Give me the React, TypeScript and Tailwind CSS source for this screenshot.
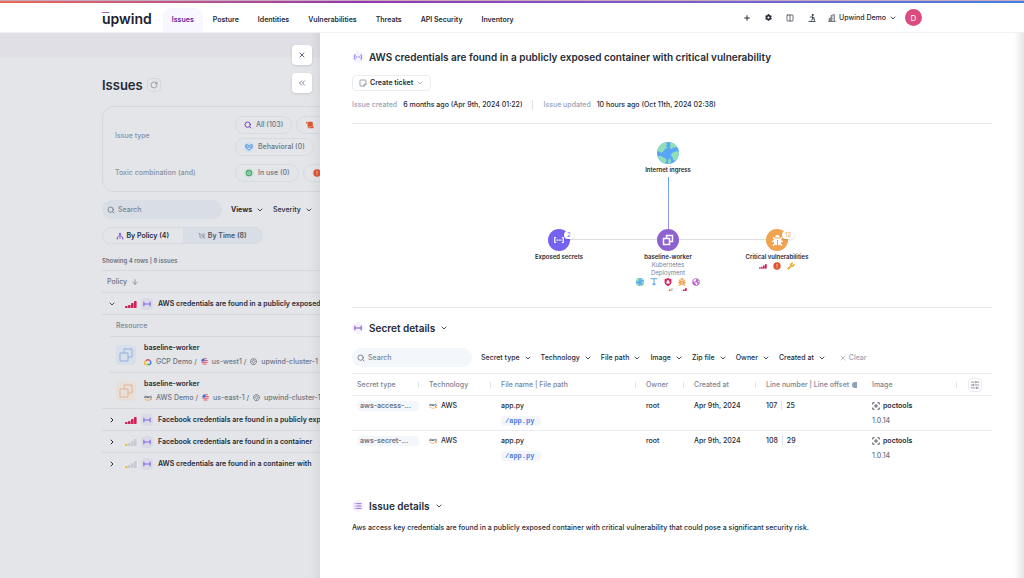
import type { ReactNode } from "react";
import {
  ArrowDown,
  ChevronDown,
  ChevronRight,
  ChevronsLeft,
  Columns2,
  List,
  Plus,
  RotateCw,
  Search,
  SlidersHorizontal,
  StickyNote,
  Wrench,
  X,
} from "lucide-react";
import { FaBug, FaCog, FaGlobeAmericas, FaScroll } from "react-icons/fa";

const navItems = [
  "Issues",
  "Posture",
  "Identities",
  "Vulnerabilities",
  "Threats",
  "API Security",
  "Inventory",
];

const secretFilters = [
  "Secret type",
  "Technology",
  "File path",
  "Image",
  "Zip file",
  "Owner",
  "Created at",
];

const secrets = [
  { type: "aws-access-...", line: 107, offset: 25 },
  { type: "aws-secret-...", line: 108, offset: 29 },
];

/* ---------- Icons ---------- */

const SecretIcon = ({ className = "" }: { className?: string }) => (
  <svg viewBox="0 0 12 12" className={className} fill="none" stroke="currentColor" strokeWidth="1.4">
    <path d="M2.600 3H.900v6h1.700M9.400 3h1.700v6H9.400" />
    <path d="M3 6h6.400" strokeWidth="1.500" strokeDasharray="1.600 .700" />
  </svg>
);

const BarIcon = ({ className = "" }: { className?: string }) => (
  <svg viewBox="0 0 12 12" className={className} fill="none" stroke="currentColor" strokeWidth="1.600">
    <path d="M1.300 2.600v6.800M10.700 2.600v6.800M1.300 6h9.400" />
  </svg>
);

const SignalIcon = ({
  level = 4,
  className = "h-2 w-3",
  color = "#cf2459",
}: {
  level?: number;
  className?: string;
  color?: string;
}) => (
  <svg viewBox="0 0 12 8" className={className}>
    {[2, 3, 5, 7].map((h, i) => (
      <rect
        key={h}
        x={i * 3}
        y={8 - h}
        width="2.6"
        height={h}
        rx=".6"
        fill={i < level ? color : "#c9cbd2"}
      />
    ))}
  </svg>
);

const AwsIcon = ({ className = "h-2 w-2" }: { className?: string }) => (
  <svg viewBox="0 0 16 12" className={className} fill="none">
    <path d="M1.500 6V3.500q0-1.500 1.500-1.500t1.500 1.500V6M1.500 4.500h3M6 2l1 4 1.300-3.500L9.500 6l1-4M15 2.500q-2.800-1-2.500.500t2 1-.300 2-2.200-.300" stroke="#4a5160" strokeWidth="1.200" />
    <path d="M1 8.500q7 4 13.500.500M13 8h2.300v2" stroke="#f29a38" strokeWidth="1.300" />
  </svg>
);

const GcpIcon = () => (
  <svg viewBox="0 0 16 14" className="h-2 w-2" fill="none" strokeWidth="3">
    <path d="M4 5a4.500 4.500 0 0 1 7.500-.800" stroke="#e0503f" />
    <path d="M11.500 4.200A5 5 0 0 1 12 12" stroke="#4a80e8" />
    <path d="M12 12H7" stroke="#3fa65b" />
    <path d="M7 12H4.500A3.200 3.200 0 0 1 4 5.500" stroke="#edbb35" />
  </svg>
);

const FlagIcon = () => (
  <svg viewBox="0 0 14 14" className="h-[7px] w-[7px]">
    <circle cx="7" cy="7" r="6.500" fill="#f1e6ea" />
    <path d="M7 1.500h4.500M7 5h6.500M1 8.500h12.500M3 12h8" stroke="#dc5160" strokeWidth="1.900" />
    <path d="M7 .500V7H.500A6.500 6.500 0 0 1 7 .500" fill="#3e6fca" />
  </svg>
);

const ClusterIcon = () => (
  <svg viewBox="0 0 14 14" className="h-[7px] w-[7px]" fill="none" stroke="#6b7483">
    <path d="M7 .800 12 3.200l1.200 5.200L9.800 13H4.200L.800 8.400 2 3.200z" strokeWidth="1.500" />
    <circle cx="7" cy="7" r="2.500" strokeWidth="1.200" />
    <path d="M7 2v2.500M7 9.500V12M2.300 7h2.200M9.500 7h2.200" />
  </svg>
);

const GlobeIcon = ({ className = "" }: { className?: string }) => (
  <svg viewBox="0 0 24 24" className={className}>
    <circle cx="12" cy="12" r="12" fill="#58a6f8" />
    <path
      d="M2 5.500C4 2.500 7 .700 10 .200l1 2.300-1.500 2 2 1.500-3 2L7 10l-2 2-2-1.500-2.800-.300Q.500 7.500 2 5.500M14.500.300Q19 1.300 22 5l-2 1.500-2.500-1-1 2.500-2.500-1.500.500-2.500zM19 11l2-1 2.900.500Q24 17 20 20.500l-2-1-1-3-2-2 1.500-2.500zM1 15.500l3-.500 3 2 2.500 1 1 3-2 2.200Q3 21 1 15.500M12.500 19l2-1 1 3-2 2.800h-1.500z"
      fill="#8fe0b4"
    />
  </svg>
);

const StairsIcon = () => (
  <svg viewBox="0 0 16 16" className="h-2 w-2" fill="none" stroke="#252b38" strokeWidth="1.600">
    <circle cx="9.500" cy="2.200" r="2" fill="#252b38" stroke="none" />
    <path d="M3.500 6.500 9 5.500v4.500l-3 3.500M9 5.500l4 2.500M9 9.500h3.500V14M1 15h14" />
  </svg>
);

const BuildingIcon = () => (
  <svg viewBox="0 0 16 16" className="h-2 w-2" fill="none" stroke="#252b38" strokeWidth="1.400">
    <path d="M6.500 14.500V3l6-1.800v13.300M6.500 7.500l-4 1.500v5.500M.500 14.800h15M9.500 5v1.500M9.500 8v1.500M9.500 11v1.500M4.500 10v3" />
  </svg>
);

const WorkloadIcon = ({ className = "" }: { className?: string }) => (
  <svg viewBox="0 0 16 16" className={className} fill="none" stroke="currentColor">
    <path d="M2 6h8v8H2zM6 6V2h8v8h-4" />
  </svg>
);

const ImageScanIcon = () => (
  <svg viewBox="0 0 16 16" className="h-2 w-2" fill="none" stroke="currentColor" strokeWidth="1.600">
    <path d="M1.500 5V1.500H5M11 1.500h3.500V5M14.500 11v3.500H11M5 14.500H1.500V11" />
    <circle cx="8" cy="8" r="2.400" />
  </svg>
);

const GatewayIcon = () => (
  <svg viewBox="0 0 14 14" className="h-2 w-2" fill="none" stroke="#62a4f2" strokeWidth="1.800">
    <path d="M1 1.500h12M7 2v9" />
    <rect x="4.500" y="9.500" width="5" height="3" fill="#62a4f2" stroke="none" />
  </svg>
);

const ShieldIcon = () => (
  <svg viewBox="0 0 14 14" className="h-2 w-2">
    <path d="M7 0l6 2v5c0 3.500-3 6-6 7-3-1-6-3.500-6-7V2z" fill="#d5265d" />
    <path d="M4.200 6.200h5.600v3.600H4.200zM5.500 4h3v2h-3z" fill="#fff" />
  </svg>
);

const AlertDot = () => (
  <svg viewBox="0 0 14 14" className="h-2 w-2">
    <circle cx="7" cy="7" r="6.500" fill="#dd5634" />
    <path d="M7 3.500v4.200M7 9v1.700" stroke="#ffc1ad" strokeWidth="1.800" />
  </svg>
);

const PolicyIcon = () => (
  <svg viewBox="0 0 14 12" className="h-2 w-2" fill="none" stroke="#7c3fc9" strokeWidth="1.500">
    <circle cx="7" cy="2.500" r="1.500" />
    <path d="M7 4v7M6 5.500 2.500 8v3M8 5.500 11.500 8v3M1 11h2.500M10.500 11H13" />
  </svg>
);

const TimeIcon = () => (
  <svg viewBox="0 0 14 12" className="h-2 w-2" fill="none" stroke="#737d8c" strokeWidth="1.300">
    <path d="M1 2h2.500v6l2 2h1M7 2v4l2 2h1.500M10.500 1v8l2 2" />
  </svg>
);

/* ---------- Shared bits ---------- */

const Chevron = () => <ChevronDown className="h-2 w-2" strokeWidth={2.500} aria-hidden="true" />;

const MenuButton = ({ label, bold = false }: { label: string; bold?: boolean }) => (
  <button
    type="button"
    aria-haspopup="menu"
    className={`flex items-center gap-1 whitespace-nowrap ${bold ? "font-bold" : "font-medium"}`}
  >
    {label}
    <Chevron />
  </button>
);

const SearchBox = ({ id, className }: { id: string; className: string }) => (
  <label htmlFor={id} className={`flex h-[19px] w-[120px] shrink-0 items-center gap-[3px] rounded-full px-[5px] ${className}`}>
    <Search className="h-2 w-2 shrink-0 text-[#6b7483]" strokeWidth={2.500} />
    <input
      id={id}
      type="search"
      placeholder="Search"
      aria-label="Search"
      className="w-full bg-transparent font-medium outline-none placeholder:text-[#7b8494]"
    />
  </label>
);

const Pill = ({ icon, children }: { icon: ReactNode; children: ReactNode }) => (
  <button
    type="button"
    className="flex h-[18px] shrink-0 items-center gap-1 rounded-full border border-[#d7dae0] px-2 font-medium whitespace-nowrap text-[#6b7483]"
  >
    {icon}
    {children}
  </button>
);

// Pills that run off under the drawer, only their icon stays in view
const IconPill = ({ label, children }: { label: string; children: ReactNode }) => (
  <button
    type="button"
    aria-label={label}
    className="flex h-[18px] w-16 shrink-0 items-center rounded-full border border-[#d7dae0] px-[9px]"
  >
    {children}
  </button>
);

/* ---------- Header ---------- */

const Header = () => (
  <header className="border-b border-[#f0f0f4] bg-white">
    <div className="h-[3px] border-t border-[#c9a9bd] bg-linear-to-r from-[#ec6a51] via-[#9436ad] via-35% to-[#3f7fe6]" />
    <div className="mx-auto flex h-[29px] max-w-[820px] items-center">
      <a href="#home" className="relative mr-[11px] pt-0.5 text-[14px] leading-4 font-semibold text-[#1c2130]">
        upwind
        <span className="absolute top-[3px] left-0 h-px w-[7px] bg-linear-to-r from-[#e8476b] to-[#5b5cf0]" />
      </a>
      <nav className="flex gap-px self-stretch pt-[5px]">
        {navItems.map((item) => (
          <a
            key={item}
            href="#nav"
            className={`flex items-center rounded-t-lg px-[9px] font-semibold whitespace-nowrap ${
              item === "Issues" ? "bg-[#f8f6fe] text-[#5c2aa0]" : ""
            }`}
          >
            {item}
          </a>
        ))}
      </nav>
      <div className="ml-auto flex items-center gap-3">
        <div className="flex items-center gap-3.5">
          <button type="button" aria-label="Add"><Plus className="h-2 w-2" strokeWidth={3} /></button>
          <button type="button" aria-label="Settings"><FaCog className="h-[7px] w-[7px]" /></button>
          <button type="button" aria-label="Docs"><Columns2 className="h-2 w-2" /></button>
          <button type="button" aria-label="Onboarding"><StairsIcon /></button>
        </div>
        <div className="flex items-center gap-2">
          <button type="button" aria-haspopup="menu" className="flex items-center gap-[3px] font-medium whitespace-nowrap">
            <BuildingIcon />
            Upwind Demo
            <Chevron />
          </button>
          <button type="button" className="h-[17px] w-[17px] rounded-full bg-[#d94c7d] text-[8px] text-white">D</button>
        </div>
      </div>
    </div>
  </header>
);

/* ---------- Issues list behind the drawer ---------- */

const PolicyRow = ({ title, level = 4, open = false }: { title: string; level?: number; open?: boolean }) => (
  <div className="flex h-[22px] items-center border-t border-[#d5d9df] pl-1.5 font-semibold whitespace-nowrap">
    <button type="button" aria-label="Toggle row" aria-expanded={open} className="mr-[9px]">
      {open ? <Chevron /> : <ChevronRight className="h-2 w-2" strokeWidth={3} />}
    </button>
    <SignalIcon level={level} color={level === 1 ? "#e2c145" : "#cf2459"} />
    <span className="mr-[5px] ml-1 rounded-sm bg-[#dcdae9] p-0.5 text-[#7d67dd]">
      <BarIcon className="h-2 w-2" />
    </span>
    {title}
  </div>
);

const ResourceRow = ({
  account,
  region,
  provider,
  tone,
}: {
  account: string;
  region: string;
  provider: ReactNode;
  tone: string;
}) => (
  <div className="ml-2 flex h-9 items-center gap-2 border-t border-[#d5d9df] pl-1.5 whitespace-nowrap">
    <span className={`rounded-sm p-0.5 ${tone}`}>
      <WorkloadIcon className="h-4 w-4" />
    </span>
    <div>
      <p className="font-semibold">baseline-worker</p>
      <p className="mt-1 flex items-center gap-1 font-medium text-[#6b7483]">
        {provider}
        {account} /
        <FlagIcon />
        {region} /
        <ClusterIcon />
        upwind-cluster-1
      </p>
    </div>
  </div>
);

const IssuesPane = () => (
  <main className="relative overflow-hidden bg-[#e4e5e8]">
    <div className="h-[25px] bg-[#e0dfe5]" />
    <div className="w-[820px] pt-[19px] pl-[102px]">
      <div className="flex items-center gap-1">
        <h1 className="text-[13px] leading-4 font-semibold">Issues</h1>
        <button type="button" aria-label="Refresh" className="rounded-sm border border-[#d3d8e0] p-0.5 text-[#7b8494]">
          <RotateCw className="h-2 w-2" />
        </button>
      </div>

      <section className="mt-[13px] flex flex-col gap-2 rounded-xl border border-[#d5d9df] py-[9px] pl-3">
        <div className="flex items-center">
          <h2 className="w-[120px] font-medium text-[#8491a5]">Issue type</h2>
          <div className="flex flex-col gap-1">
            <div className="flex gap-1">
              <Pill icon={<Search className="h-2 w-2 text-[#7c3fc9]" strokeWidth={3} />}>All (103)</Pill>
              <IconPill label="Threats">
                <FaScroll className="h-2 w-2 text-[#dd5634]" />
              </IconPill>
            </div>
            <div className="flex">
              <Pill
                icon={
                  <svg viewBox="0 0 14 14" className="h-2.5 w-2.5">
                    <circle cx="7" cy="7" r="7" fill="#cfdff0" />
                    <path d="M2.500 4h3L7 5.500 8.500 4h3v3.500L7 11.500 2.500 7.500zM2.500 7h9" fill="none" stroke="#4c9be8" strokeWidth="1.400" />
                  </svg>
                }
              >
                Behavioral (0)
              </Pill>
            </div>
          </div>
        </div>
        <div className="flex items-center">
          <h2 className="w-[120px] font-medium text-[#8491a5]">Toxic combination (and)</h2>
          <div className="flex gap-1">
            <Pill
              icon={
                <svg viewBox="0 0 14 14" className="h-2.5 w-2.5">
                  <circle cx="7" cy="7" r="7" fill="#d3e3dc" />
                  <circle cx="7" cy="7" r="3.600" fill="none" stroke="#45ab6e" strokeWidth="2" />
                  <path d="M6 5.300 8.800 7 6 8.700z" fill="#45ab6e" />
                </svg>
              }
            >
              In use (0)
            </Pill>
            <IconPill label="Critical">
              <AlertDot />
            </IconPill>
          </div>
        </div>
      </section>

      <div className="mt-2 flex items-center gap-[9px]">
        <SearchBox id="issue-search" className="bg-[#d9dee6]" />
        <MenuButton label="Views" bold />
        <MenuButton label="Severity" />
      </div>

      <div className="mt-2 flex h-[17px] w-[161px] overflow-hidden rounded-full border border-[#d5dae2]">
        <button type="button" className="flex flex-1 items-center justify-center gap-0.5 font-semibold whitespace-nowrap">
          <PolicyIcon />
          By Policy (4)
        </button>
        <button
          type="button"
          className="flex flex-1 items-center justify-center gap-0.5 bg-[#d9dee6] font-semibold whitespace-nowrap text-[#4b5463]"
        >
          <TimeIcon />
          By Time (8)
        </button>
      </div>

      <p className="mt-3 mb-1 text-[6px] leading-[10px] font-semibold text-[#6b7483]">Showing 4 rows | 8 issues</p>

      <div className="flex h-[22px] items-center gap-1 border-t border-[#d5d9df] pl-[5px] font-medium text-[#6b7483]">
        Policy
        <ArrowDown className="h-2 w-2" />
      </div>
      <PolicyRow open title="AWS credentials are found in a publicly exposed container" />
      <div className="flex h-[22px] items-center border-t border-[#d5d9df] pl-3.5 font-medium text-[#7b8494]">
        Resource
      </div>
      <ResourceRow
        account="GCP Demo"
        region="us-west1"
        provider={<GcpIcon />}
        tone="bg-[#d7dfea] text-[#8fb0e0]"
      />
      <ResourceRow
        account="AWS Demo"
        region="us-east-1"
        provider={<AwsIcon />}
        tone="bg-[#e6dfda] text-[#e6b48e]"
      />
      <PolicyRow title="Facebook credentials are found in a publicly exposed container" />
      <PolicyRow level={1} title="Facebook credentials are found in a container" />
      <PolicyRow level={1} title="AWS credentials are found in a container with" />
    </div>

    {/* Drawer controls */}
    <div className="absolute inset-y-0 right-0 w-2.5 bg-linear-to-r from-transparent to-black/5" />
    <div className="absolute top-3 right-2 flex flex-col gap-2">
      <button type="button" aria-label="Close" className="rounded-sm bg-white p-1.5 text-[#5f6878] shadow-sm">
        <X className="h-2 w-2" strokeWidth={3} />
      </button>
      <button type="button" aria-label="Expand" className="rounded-sm bg-white p-[5px] text-[#5f6878] shadow-sm">
        <ChevronsLeft className="h-2.5 w-2.5" />
      </button>
    </div>
  </main>
);

/* ---------- Graph ---------- */

const GraphNode = ({
  label,
  tone = "",
  count,
  countTone = "",
  children,
  footer,
}: {
  label: string;
  tone?: string;
  count?: number;
  countTone?: string;
  children: ReactNode;
  footer?: ReactNode;
}) => (
  <div className="flex w-[109px] flex-col items-center">
    <div className={`relative flex h-[22px] w-[22px] items-center justify-center rounded-full text-white ${tone}`}>
      {children}
      {count !== undefined && (
        <span className={`absolute top-0.5 left-4 rounded-full bg-white px-[3px] text-[6px] leading-2 shadow-sm ${countTone}`}>
          {count}
        </span>
      )}
    </div>
    <p className="mt-px text-[6px] leading-[9px] font-semibold whitespace-nowrap">{label}</p>
    {footer}
  </div>
);

const Graph = () => (
  <section className="flex h-[185px] flex-col items-center border-y border-[#e6e7ec] pt-[18px] pr-2">
    <GraphNode label="Internet ingress">
      <GlobeIcon className="h-[22px] w-[22px]" />
    </GraphNode>
    <div className="mt-[3px] h-[52px] w-px bg-linear-to-b from-[#62a9f8] to-[#a08cf0]" />
    <div className="relative flex">
      <div className="absolute inset-x-14 top-[10px] h-px bg-[#dfe0e3]" />
      <GraphNode label="Exposed secrets" tone="bg-[#7562f0]" count={2} countTone="text-[#7562f0]">
        <SecretIcon className="h-2.5 w-2.5" />
      </GraphNode>
      <GraphNode
        label="baseline-worker"
        tone="bg-[#8d61cf]"
        footer={
          <>
            <p className="w-9 text-center text-[6px] leading-2 text-[#7b8494]">Kubernetes Deployment</p>
            <div className="mt-px flex gap-1.5">
              <GlobeIcon className="h-2 w-2" />
              <GatewayIcon />
              <ShieldIcon />
              <FaBug className="h-2 w-2 text-[#eda24b]" />
              <FaGlobeAmericas className="h-2 w-2 text-[#bd68c8]" />
            </div>
            <div className="mt-px flex h-1 gap-1.5 overflow-hidden pl-4">
              <SignalIcon level={3} className="h-1.5 w-2" color="#e2703f" />
              <SignalIcon className="h-1.5 w-2" />
            </div>
          </>
        }
      >
        <WorkloadIcon className="h-3 w-3 stroke-2" />
      </GraphNode>
      <GraphNode
        label="Critical vulnerabilities"
        tone="bg-[#f0a350]"
        count={12}
        countTone="text-[#f0a350]"
        footer={
          <div className="mt-px flex gap-1.5">
            <SignalIcon className="h-2 w-2" />
            <AlertDot />
            <Wrench className="h-2 w-2 fill-[#e9b23c] text-[#e9b23c]" />
          </div>
        }
      >
        <FaBug className="h-[11px] w-[11px]" />
      </GraphNode>
    </div>
  </section>
);

/* ---------- Drawer ---------- */

const SectionTitle = ({ icon, title }: { icon: ReactNode; title: string }) => (
  <h3 className="flex items-center gap-[5px] text-[10px] leading-3 font-semibold">
    <span className="rounded-full bg-[#f6f2fd] p-0.5 text-[#8350cc]">{icon}</span>
    {title}
    <button type="button" aria-label={`Toggle ${title}`}>
      <Chevron />
    </button>
  </h3>
);

const HeadCell = ({ children, divider = true }: { children: ReactNode; divider?: boolean }) => (
  <th className={`relative px-[5px] text-left font-medium whitespace-nowrap ${divider ? "" : "overflow-hidden"}`}>
    {children}
    {divider && <span className="absolute top-2 right-[5px] h-1.5 w-px bg-[#e2e4ea]" />}
  </th>
);

const SecretsTable = () => (
  <table className="mt-1.5 w-full table-fixed border-t border-[#ebecf1]">
    <colgroup>
      <col className="w-[72px]" />
      <col className="w-[72px]" />
      <col className="w-[145px]" />
      <col className="w-[48px]" />
      <col className="w-[72px]" />
      <col className="w-[106px]" />
      <col className="w-[95px]" />
      <col className="w-[30px]" />
    </colgroup>
    <thead>
      <tr className="h-[22px] text-[#7b8494]">
        <HeadCell>Secret type</HeadCell>
        <HeadCell>Technology</HeadCell>
        <HeadCell>File name | File path</HeadCell>
        <HeadCell>Owner</HeadCell>
        <HeadCell>Created at</HeadCell>
        <HeadCell divider={false}>
          <span className="flex items-center gap-[3px]">
            Line number | Line offset
            <span className="h-1.5 w-[5px] shrink-0 rounded-l-full bg-[#8da0c0]" />
          </span>
        </HeadCell>
        <HeadCell>Image</HeadCell>
        <th className="pl-1.5 text-left">
          <button type="button" aria-label="Columns" className="block rounded-sm border border-[#e9ebf0] p-px">
            <SlidersHorizontal className="h-2.5 w-2.5" />
          </button>
        </th>
      </tr>
    </thead>
    <tbody>
      {secrets.map((secret) => (
        <tr key={secret.type} className="h-[35px] border-t border-[#ebecf1] align-top *:px-[5px] *:pt-[5px]">
          <td>
            <span className="block rounded-sm bg-[#f3f6fa] px-[3px] font-semibold text-[#6b7483]">{secret.type}</span>
          </td>
          <td>
            <span className="flex items-center gap-1 font-medium">
              <AwsIcon />
              AWS
            </span>
          </td>
          <td className="font-medium">
            app.py
            <span className="mt-[5px] block w-10 rounded-sm bg-[#f3f6fa] px-1 font-mono font-bold text-[#4a80e0]">
              /app.py
            </span>
          </td>
          <td className="font-medium">root</td>
          <td className="font-medium whitespace-nowrap">Apr 9th, 2024</td>
          <td className="font-medium">
            <span className="border-r border-[#dfe2e8] pr-1">{secret.line}</span>
            <span className="pl-1">{secret.offset}</span>
          </td>
          <td>
            <span className="flex items-center gap-[3px] font-semibold">
              <ImageScanIcon />
              poctools
            </span>
            <span className="mt-[5px] block font-medium text-[#6b7483]">1.0.14</span>
          </td>
          <td />
        </tr>
      ))}
    </tbody>
  </table>
);

const IssueDrawer = () => (
  <aside className="relative bg-white px-8 pt-[18px]">
    <h2 className="flex items-center gap-[5px] text-[10px] leading-3 font-semibold">
      <span className="rounded-full bg-[#f6f4ff] p-0.5 text-[#8172f2]">
        <SecretIcon className="h-2 w-2" />
      </span>
      AWS credentials are found in a publicly exposed container with critical vulnerability
    </h2>
    <button
      type="button"
      aria-haspopup="menu"
      className="mt-3 flex h-4 items-center gap-[3px] rounded-sm border border-[#ebecf0] px-1.5 font-semibold"
    >
      <StickyNote className="h-2 w-2 -scale-y-100 text-[#6b7483]" />
      Create ticket
      <ChevronDown className="h-2 w-2 text-[#8b93a1]" />
    </button>
    <div className="mt-[9px] mb-[13px] flex items-center font-medium">
      <span className="mr-1.5 text-[#97a2b6]">Issue created</span>
      6 months ago (Apr 9th, 2024 01:22)
      <span className="mx-2.5 h-2.5 w-px bg-[#dfe2e8]" />
      <span className="mr-1.5 text-[#97a2b6]">Issue updated</span>
      10 hours ago (Oct 11th, 2024 02:38)
    </div>

    <Graph />

    <section className="pt-3.5">
      <SectionTitle icon={<BarIcon className="h-2 w-2" />} title="Secret details" />
      <div className="mt-3.5 flex items-center gap-[9px]">
        <SearchBox id="secret-search" className="bg-[#f3f6fa]" />
        {secretFilters.map((filter) => (
          <MenuButton key={filter} label={filter} />
        ))}
        <button type="button" className="ml-1 flex items-center gap-0.5 font-medium text-[#97a2b6]">
          <X className="h-2 w-2" />
          Clear
        </button>
      </div>
      <SecretsTable />
    </section>

    <section className="pt-[34px]">
      <SectionTitle icon={<List className="h-2 w-2" strokeWidth={2.500} />} title="Issue details" />
      <p className="mt-[11px] font-medium">
        Aws access key credentials are found in a publicly exposed container with critical vulnerability that could pose
        a significant security risk.
      </p>
    </section>

    <div className="absolute inset-y-0 right-0 w-2.5 bg-linear-to-r from-transparent to-black/10" />
  </aside>
);

export default function App() {
  return (
    <div className="flex min-h-screen flex-col bg-white font-['Inter',sans-serif] text-[7px] leading-[10px] text-[#252b38]">
      <Header />
      <div className="grid flex-1 grid-cols-[5fr_11fr]">
        <IssuesPane />
        <IssueDrawer />
      </div>
    </div>
  );
}
